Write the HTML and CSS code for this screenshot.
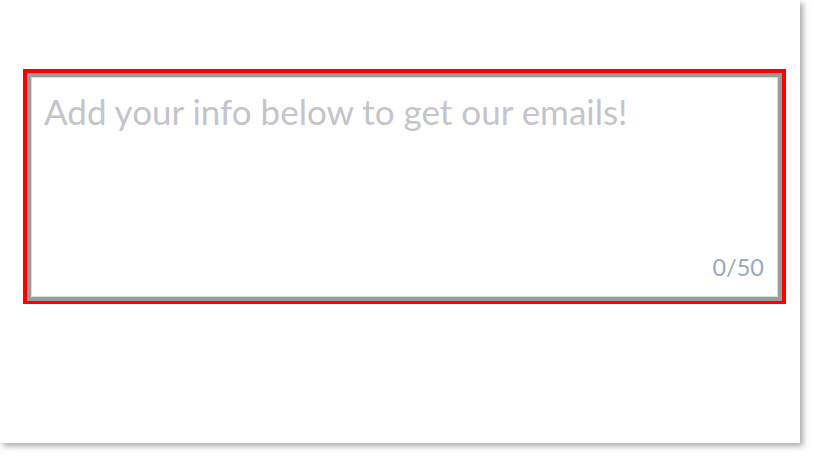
FILE: index.html
```html
<!DOCTYPE html>
<html>
<head>
<meta charset="utf-8">
<link rel="stylesheet" href="styles.css">
</head>
<body>
<div class="card">
  <div class="focus">
    <div class="field">
      <div class="placeholder">Add your info below to get our emails!</div>
      <div class="counter">0/50</div>
    </div>
  </div>
</div>
</body>
</html>
```
FILE: styles.css
```css
html, body {
  margin: 0;
  padding: 0;
  background: #ffffff;
}
body {
  width: 815px;
  height: 459px;
  overflow: hidden;
  font-family: Lato, "Noto Sans", sans-serif;
}
.card {
  width: 800px;
  height: 443px;
  box-sizing: border-box;
  background: #ffffff;
  box-shadow: 3px 3px 6px rgba(0, 0, 0, 0.35);
  padding: 69px 0 0 23px;
}
.focus {
  width: 763px;
  height: 235px;
  box-sizing: border-box;
  border: 4px solid #ff0000;
  border-bottom-width: 3px;
}
.field {
  height: 100%;
  box-sizing: border-box;
  border: 4px solid #9b9b9b;
  box-shadow: inset 0 0 0 1px #dcdcdc;
  padding: 13px 14px 16px 13px;
  display: flex;
  flex-direction: column;
  justify-content: space-between;
}
.placeholder {
  font-size: 35px;
  color: #c4c4cb;
  line-height: 1.2;
}
.counter {
  align-self: flex-end;
  font-size: 23.5px;
  color: #9aa8b8;
  line-height: 1.2;
}
```
